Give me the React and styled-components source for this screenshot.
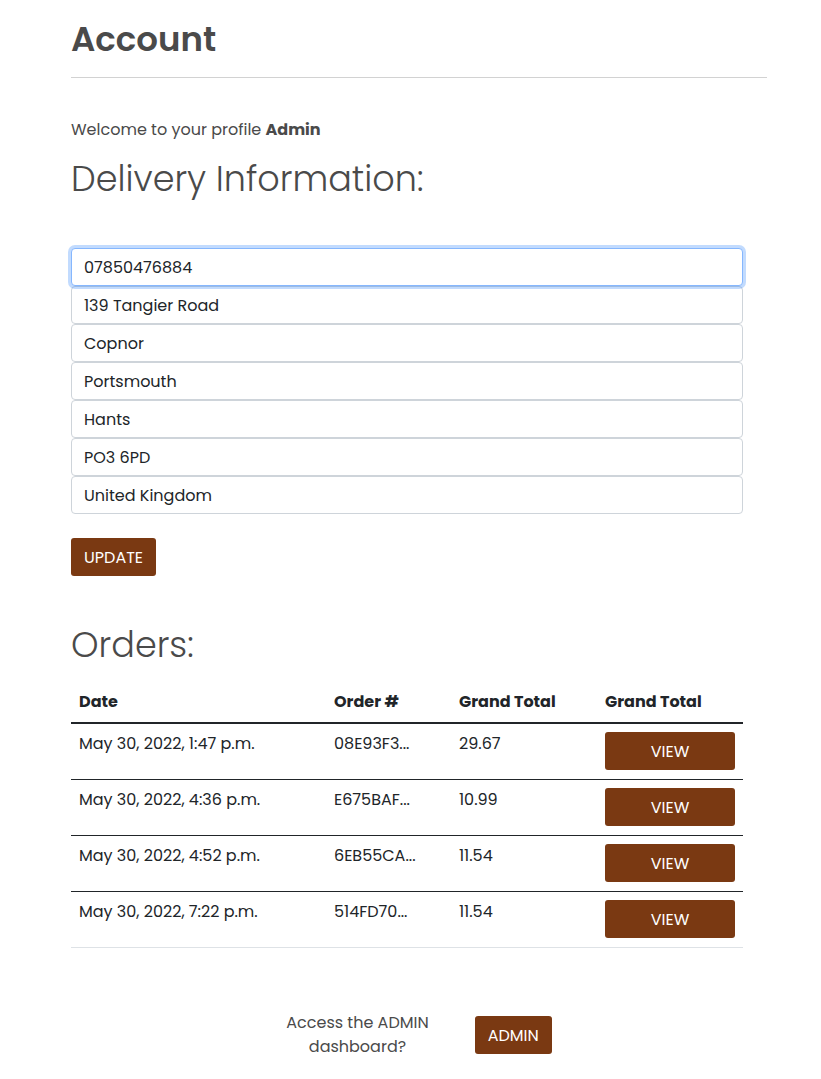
import React from "react";
import styled, { createGlobalStyle } from "styled-components";

const GlobalStyle = createGlobalStyle`
	body {
		margin: 0;
		background: #ffffff;
		font-family: "Poppins", "Open Sans", "Noto Sans", sans-serif;
		font-size: 16px;
		color: #4a4a4a;
	}
`;

const address = [
	"07850476884",
	"139 Tangier Road",
	"Copnor",
	"Portsmouth",
	"Hants",
	"PO3 6PD",
	"United Kingdom",
];

const orders = [
	{ date: "May 30, 2022, 1:47 p.m.", number: "08E93F3...", total: "29.67" },
	{ date: "May 30, 2022, 4:36 p.m.", number: "E675BAF...", total: "10.99" },
	{ date: "May 30, 2022, 4:52 p.m.", number: "6EB55CA...", total: "11.54" },
	{ date: "May 30, 2022, 7:22 p.m.", number: "514FD70...", total: "11.54" },
];

const App = () => {
	return (
		<>
			<GlobalStyle />
			<Page>
				<Title>Account</Title>
				<Rule />
				<Welcome>
					Welcome to your profile <b>Admin</b>
				</Welcome>
				<Heading $top={16}>Delivery Information:</Heading>
				<Form>
					{address.map((value, i) => (
						<Field key={value} defaultValue={value} $focused={i === 0} />
					))}
				</Form>
				<BrownButton $top={24}>UPDATE</BrownButton>
				<Heading $top={48}>Orders:</Heading>
				<Table>
					<thead>
						<tr>
							<Th>Date</Th>
							<Th>Order #</Th>
							<Th>Grand Total</Th>
							<Th>Grand Total</Th>
						</tr>
					</thead>
					<tbody>
						{orders.map((order) => (
							<tr key={order.date}>
								<Td>{order.date}</Td>
								<Td>{order.number}</Td>
								<Td>{order.total}</Td>
								<Td>
									<ViewButton>VIEW</ViewButton>
								</Td>
							</tr>
						))}
					</tbody>
				</Table>
				<Footer>
					<FooterText>
						Access the ADMIN
						<br />
						dashboard?
					</FooterText>
					<BrownButton>ADMIN</BrownButton>
				</Footer>
			</Page>
		</>
	);
};
export default App;

const Page = styled.div`
	width: 696px;
	margin-left: 71px;
	padding-top: 19px;
	padding-bottom: 10px;
`;

const Title = styled.h1`
	margin: 0;
	font-size: 34px;
	font-weight: 600;
	line-height: 41px;
	color: #4a4a4a;
`;

const Rule = styled.hr`
	margin: 17px 0 0;
	border: 0;
	border-top: 1px solid #d2d2d2;
`;

const Welcome = styled.p`
	margin: 40px 0 0;
	font-size: 16px;
	line-height: 24px;
	b {
		font-weight: 700;
	}
`;

const Heading = styled.h2`
	margin: ${({ $top }) => $top}px 0 0;
	font-size: 35px;
	font-weight: 300;
	line-height: 42px;
	color: #4a4a4a;
`;

const Form = styled.div`
	display: flex;
	flex-direction: column;
	width: 672px;
	margin-top: 48px;
`;

const Field = styled.input`
	box-sizing: border-box;
	height: 38px;
	padding: 0 12px;
	border: 1px solid ${({ $focused }) => ($focused ? "#86b7fe" : "#ced4da")};
	border-radius: 4px;
	font-family: inherit;
	font-size: 16px;
	color: #212529;
	outline: none;
	box-shadow: ${({ $focused }) =>
		$focused ? "0 0 0 3px rgba(13, 110, 253, 0.25)" : "none"};
	position: relative;
	z-index: ${({ $focused }) => ($focused ? 1 : 0)};
`;

const BrownButton = styled.button`
	display: block;
	margin-top: ${({ $top }) => $top || 0}px;
	height: 38px;
	padding: 0 13px;
	border: 0;
	border-radius: 3px;
	background: #7a3912;
	color: #ffffff;
	font-family: inherit;
	font-size: 16px;
`;

const Table = styled.table`
	width: 672px;
	margin-top: 16px;
	border-collapse: collapse;
	color: #212529;
`;

const Th = styled.th`
	padding: 8px;
	line-height: 24px;
	text-align: left;
	font-size: 16px;
	font-weight: 700;
	border-bottom: 2px solid #212529;
	&:nth-child(1) { width: 239px; }
	&:nth-child(2) { width: 109px; }
	&:nth-child(3) { width: 130px; }
`;

const Td = styled.td`
	padding: 8px 8px 9px;
	line-height: 24px;
	vertical-align: top;
	font-size: 16px;
	border-bottom: 1px solid #212529;
	tr:last-child & {
		border-bottom-color: #dee2e6;
	}
`;

const ViewButton = styled.button`
	display: block;
	width: 130px;
	height: 38px;
	border: 0;
	border-radius: 3px;
	background: #7a3912;
	color: #ffffff;
	font-family: inherit;
	font-size: 16px;
`;

const Footer = styled.div`
	display: flex;
	align-items: center;
	justify-content: center;
	gap: 46px;
	margin-top: 63px;
`;

const FooterText = styled.p`
	margin: 0;
	text-align: center;
	font-size: 16px;
	line-height: 24px;
	color: #4a4a4a;
`;
